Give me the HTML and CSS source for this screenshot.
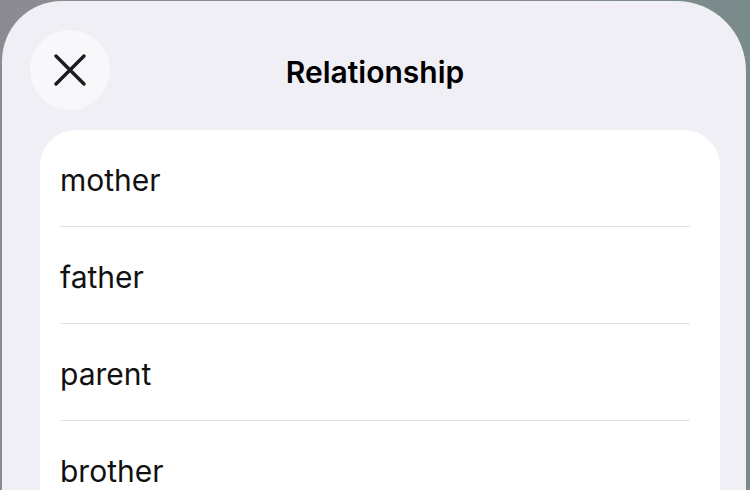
FILE: index.html
```html
<!DOCTYPE html>
<html lang="en">
<head>
<meta charset="utf-8">
<title>Relationship</title>
<link rel="stylesheet" href="styles.css">
</head>
<body>
<div class="sheet">
  <header class="header">
    <button class="close" aria-label="Close">
      <svg width="32" height="32" viewBox="0 0 32 32" aria-hidden="true">
        <path d="M2 2 L30 30 M30 2 L2 30" stroke="#1c1c1e" stroke-width="3.4" stroke-linecap="round" fill="none"/>
      </svg>
    </button>
    <h1 class="title">Relationship</h1>
    <span class="spacer"></span>
  </header>
  <ul class="list">
    <li class="row"><span class="label">mother</span></li>
    <li class="row"><span class="label">father</span></li>
    <li class="row"><span class="label">parent</span></li>
    <li class="row"><span class="label">brother</span></li>
  </ul>
</div>
</body>
</html>
```
FILE: styles.css
```css
html, body {
  margin: 0;
  padding: 0;
  height: 490px;
  overflow: hidden;
}
body {
  background: linear-gradient(90deg, #8c8b92 0%, #858a8f 50%, #7a8b8b 100%);
  font-family: Inter, "Noto Sans", "Liberation Sans", sans-serif;
}
.sheet {
  margin: 1px 4px 0 2px;
  height: 489px;
  background: #f0eff5;
  border-radius: 60px 70px 0 0;
  overflow: hidden;
}
.header {
  display: grid;
  grid-template-columns: 80px 1fr 80px;
  align-items: center;
  padding: 29px 26px 0 28px;
}
.close {
  width: 80px;
  height: 80px;
  border-radius: 50%;
  border: none;
  background: #f8f8fa;
  display: flex;
  align-items: center;
  justify-content: center;
  padding: 0;
}
.title {
  margin: 0;
  padding-top: 3px;
  text-align: center;
  font-size: 30px;
  font-weight: 600;
  color: #000;
  letter-spacing: 0;
}
.list {
  list-style: none;
  margin: 20px 26px 0 38px;
  padding: 0 0 0 20px;
  background: #fff;
  border-radius: 36px 36px 0 0;
}
.row {
  height: 96px;
  display: flex;
  align-items: center;
  margin-right: 30px;
  border-bottom: 1.5px solid #e2e2e6;
}
.label {
  font-size: 30px;
  color: #111;
  padding-top: 3px;
}
```
